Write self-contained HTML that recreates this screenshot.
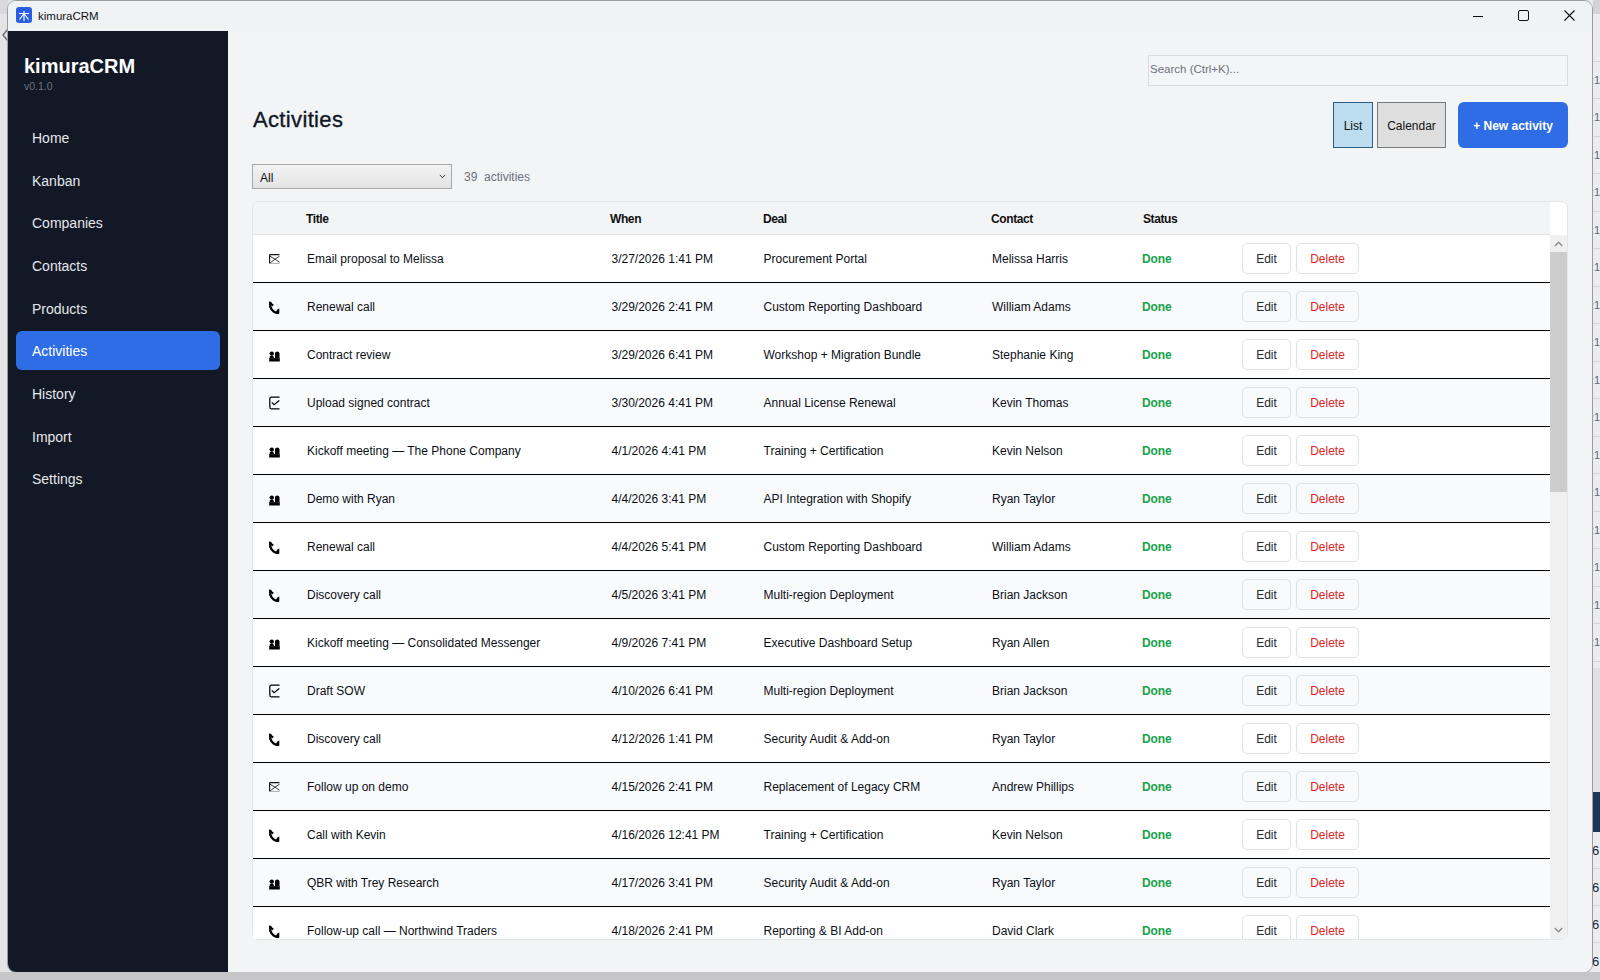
<!DOCTYPE html>
<html><head><meta charset="utf-8"><title>kimuraCRM</title>
<style>
*{box-sizing:border-box;margin:0;padding:0}
html,body{width:1600px;height:980px;overflow:hidden}
body{position:relative;background:#e4e4e6;font-family:"Liberation Sans",sans-serif;color:#111827}
.abs{position:absolute}
#bgbottom{left:0;top:972px;width:1600px;height:8px;background:#c6c6c8;z-index:2}
#bgright{left:1590px;top:0;width:10px;height:980px;background:#ececee}
#win{left:7px;top:0;width:1586px;height:973px;border:1px solid #9c9c9e;border-radius:9px;overflow:hidden;background:#f3f4f6}
#titlebar{left:0;top:0;width:1584px;height:30px;background:#eff3f6}
#sidebar{left:0;top:30px;width:220px;height:942px;background:#121826}
#main{left:220px;top:30px;width:1364px;height:942px;background:#f3f4f6}
.nav{position:absolute;left:8px;width:204px;height:39px;border-radius:6px;color:#e5e7eb;font-size:14px;line-height:41px;padding-left:16px}
.nav.active{background:#2e6de6;color:#fff}
#search{left:920px;top:24px;width:420px;height:31px;border:1px solid #d9dce1;background:#f4f5f7;font-size:11.5px;color:#6b7280;line-height:27px;padding-left:1px}
#heading{left:25px;top:74.5px;font-size:22px;letter-spacing:0.35px;line-height:28px;color:#111827;-webkit-text-stroke:0.35px #111827}
.wb{position:absolute;top:71px;height:46px;font-size:12px;line-height:47px;text-align:center;color:#111}
#newbtn{left:1230px;top:71px;width:110px;height:46px;border-radius:6px;background:#2e6de6;color:#fff;font-size:12px;font-weight:bold;line-height:48px;text-align:center}
#filter{left:24px;top:133px;width:200px;height:25px;border:1px solid #a9a9a9;background:linear-gradient(#f2f2f2,#e4e4e4);font-size:12px;line-height:26px;padding-left:7px;color:#111}
#count{left:236px;top:133.5px;font-size:12px;line-height:25px;color:#6b7280;white-space:pre}
#table{left:24px;top:170px;width:1316px;height:739px;border:1px solid #e3e5e9;border-radius:7px;background:#fff}
#thead{left:0;top:0;width:1297px;height:33px;border-top-left-radius:6px;background:#f3f4f6;border-bottom:1px solid #e3e5e9}
.h{position:absolute;top:0;font-size:12px;font-weight:bold;line-height:35px;letter-spacing:-0.4px;color:#111}
.row{position:absolute;left:0;width:1297px;height:48px;border-bottom:1px solid #000}
.row .c{position:absolute;top:0;font-size:12px;line-height:48px;color:#0b0f17;white-space:nowrap}
.row .done{color:#16a34a;font-weight:bold;letter-spacing:-0.1px}
.row .btn{position:absolute;top:8px;height:31px;border:1px solid #dfe2e6;border-radius:5px;font-size:12px;line-height:31px;text-align:center;color:#1f2937}
.row .del{color:#dc2626}
.ico{position:absolute;left:16px}
#sb{left:1297px;top:0;width:17px;height:737px;background:#f0f0f0}
</style></head>
<body>
<div id="bgbottom" class="abs"></div>
<div id="bgright" class="abs"></div>
<div class="abs" style="left:0;top:0;width:8px;height:14px;background:#d9d8dc"></div>
<svg class="abs" style="left:0;top:28px" width="8" height="14" viewBox="0 0 8 14"><path d="M7.5 1.5L3 7L7.5 12.5" stroke="#6a6a70" stroke-width="1.4" fill="none"/></svg>
<div class="abs" style="left:1593px;top:0;width:7px;height:14px;background:#d3d3d5"></div>
<div class="abs" style="left:1593px;top:668px;width:7px;height:124px;background:#e0e0e2"></div>
<div class="abs" style="left:1593px;top:792px;width:7px;height:40px;background:#1d3557"></div>
<div class="abs" style="left:1593px;top:61px;width:7px;height:1px;background:#d6d6d8"></div><div class="abs" style="left:1593px;top:98px;width:7px;height:1px;background:#d6d6d8"></div><div class="abs" style="left:1593px;top:136px;width:7px;height:1px;background:#d6d6d8"></div><div class="abs" style="left:1593px;top:173px;width:7px;height:1px;background:#d6d6d8"></div><div class="abs" style="left:1593px;top:211px;width:7px;height:1px;background:#d6d6d8"></div><div class="abs" style="left:1593px;top:248px;width:7px;height:1px;background:#d6d6d8"></div><div class="abs" style="left:1593px;top:286px;width:7px;height:1px;background:#d6d6d8"></div><div class="abs" style="left:1593px;top:323px;width:7px;height:1px;background:#d6d6d8"></div><div class="abs" style="left:1593px;top:361px;width:7px;height:1px;background:#d6d6d8"></div><div class="abs" style="left:1593px;top:398px;width:7px;height:1px;background:#d6d6d8"></div><div class="abs" style="left:1593px;top:436px;width:7px;height:1px;background:#d6d6d8"></div><div class="abs" style="left:1593px;top:473px;width:7px;height:1px;background:#d6d6d8"></div><div class="abs" style="left:1593px;top:511px;width:7px;height:1px;background:#d6d6d8"></div><div class="abs" style="left:1593px;top:548px;width:7px;height:1px;background:#d6d6d8"></div><div class="abs" style="left:1593px;top:586px;width:7px;height:1px;background:#d6d6d8"></div><div class="abs" style="left:1593px;top:623px;width:7px;height:1px;background:#d6d6d8"></div><div class="abs" style="left:1593px;top:661px;width:7px;height:1px;background:#d6d6d8"></div><div class="abs" style="left:1593px;top:868px;width:7px;height:1px;background:#d6d6d8"></div><div class="abs" style="left:1593px;top:905px;width:7px;height:1px;background:#d6d6d8"></div><div class="abs" style="left:1593px;top:942px;width:7px;height:1px;background:#d6d6d8"></div><div class="abs" style="left:1593px;top:73px;width:7px;height:14px;overflow:hidden;font-size:11px;line-height:14px;color:#667"><span style="position:relative;left:-2px">:1</span></div><div class="abs" style="left:1593px;top:110px;width:7px;height:14px;overflow:hidden;font-size:11px;line-height:14px;color:#667"><span style="position:relative;left:-2px">:1</span></div><div class="abs" style="left:1593px;top:148px;width:7px;height:14px;overflow:hidden;font-size:11px;line-height:14px;color:#667"><span style="position:relative;left:-2px">:1</span></div><div class="abs" style="left:1593px;top:185px;width:7px;height:14px;overflow:hidden;font-size:11px;line-height:14px;color:#667"><span style="position:relative;left:-2px">:1</span></div><div class="abs" style="left:1593px;top:223px;width:7px;height:14px;overflow:hidden;font-size:11px;line-height:14px;color:#667"><span style="position:relative;left:-2px">:1</span></div><div class="abs" style="left:1593px;top:260px;width:7px;height:14px;overflow:hidden;font-size:11px;line-height:14px;color:#667"><span style="position:relative;left:-2px">:1</span></div><div class="abs" style="left:1593px;top:298px;width:7px;height:14px;overflow:hidden;font-size:11px;line-height:14px;color:#667"><span style="position:relative;left:-2px">:1</span></div><div class="abs" style="left:1593px;top:335px;width:7px;height:14px;overflow:hidden;font-size:11px;line-height:14px;color:#667"><span style="position:relative;left:-2px">:1</span></div><div class="abs" style="left:1593px;top:373px;width:7px;height:14px;overflow:hidden;font-size:11px;line-height:14px;color:#667"><span style="position:relative;left:-2px">:1</span></div><div class="abs" style="left:1593px;top:410px;width:7px;height:14px;overflow:hidden;font-size:11px;line-height:14px;color:#667"><span style="position:relative;left:-2px">:1</span></div><div class="abs" style="left:1593px;top:448px;width:7px;height:14px;overflow:hidden;font-size:11px;line-height:14px;color:#667"><span style="position:relative;left:-2px">:1</span></div><div class="abs" style="left:1593px;top:485px;width:7px;height:14px;overflow:hidden;font-size:11px;line-height:14px;color:#667"><span style="position:relative;left:-2px">:1</span></div><div class="abs" style="left:1593px;top:523px;width:7px;height:14px;overflow:hidden;font-size:11px;line-height:14px;color:#667"><span style="position:relative;left:-2px">:1</span></div><div class="abs" style="left:1593px;top:560px;width:7px;height:14px;overflow:hidden;font-size:11px;line-height:14px;color:#667"><span style="position:relative;left:-2px">:1</span></div><div class="abs" style="left:1593px;top:598px;width:7px;height:14px;overflow:hidden;font-size:11px;line-height:14px;color:#667"><span style="position:relative;left:-2px">:1</span></div><div class="abs" style="left:1593px;top:635px;width:7px;height:14px;overflow:hidden;font-size:11px;line-height:14px;color:#667"><span style="position:relative;left:-2px">:1</span></div><div class="abs" style="left:1593px;top:843px;width:7px;height:16px;overflow:hidden;font-size:13px;line-height:16px;color:#223"><span style="position:relative;left:-1px">6</span></div><div class="abs" style="left:1593px;top:880px;width:7px;height:16px;overflow:hidden;font-size:13px;line-height:16px;color:#223"><span style="position:relative;left:-1px">6</span></div><div class="abs" style="left:1593px;top:917px;width:7px;height:16px;overflow:hidden;font-size:13px;line-height:16px;color:#223"><span style="position:relative;left:-1px">6</span></div><div class="abs" style="left:1593px;top:954px;width:7px;height:16px;overflow:hidden;font-size:13px;line-height:16px;color:#223"><span style="position:relative;left:-1px">6</span></div>
<div id="win" class="abs">
  <div id="titlebar" class="abs">
    <svg class="abs" style="left:8px;top:6px" width="16" height="16" viewBox="0 0 16 16">
      <rect x="0" y="0" width="16" height="16" rx="3" fill="#2a5de0"/>
      <path d="M3 6.5H13M8 4V14M8 6.5L3.5 12.5M8 6.5L12.5 12.5" stroke="#fff" stroke-width="1.1" fill="none"/>
    </svg>
    <div class="abs" style="left:30px;top:9px;font-size:11.5px;color:#111">kimuraCRM</div>
    <svg class="abs" style="left:1464px;top:8px" width="14" height="14" viewBox="0 0 14 14"><path d="M1 7.5H11" stroke="#111" stroke-width="1"/></svg>
    <svg class="abs" style="left:1509px;top:7px" width="14" height="14" viewBox="0 0 14 14"><rect x="1.5" y="2.5" width="10" height="10" rx="1.5" stroke="#111" stroke-width="1" fill="none"/></svg>
    <svg class="abs" style="left:1555px;top:7px" width="14" height="14" viewBox="0 0 14 14"><path d="M1.5 2.5L11.5 12.5M11.5 2.5L1.5 12.5" stroke="#111" stroke-width="1.15"/></svg>
  </div>
  <div id="sidebar" class="abs">
    <div class="abs" style="left:16px;top:24px;font-size:20px;font-weight:bold;color:#fff">kimuraCRM</div>
    <div class="abs" style="left:16px;top:48.5px;font-size:10.5px;color:#6b7280">v0.1.0</div>
    <div class="nav" style="top:87px">Home</div>
    <div class="nav" style="top:129.75px">Kanban</div>
    <div class="nav" style="top:172.4px">Companies</div>
    <div class="nav" style="top:215px">Contacts</div>
    <div class="nav" style="top:257.7px">Products</div>
    <div class="nav active" style="top:300.3px">Activities</div>
    <div class="nav" style="top:343px">History</div>
    <div class="nav" style="top:385.6px">Import</div>
    <div class="nav" style="top:428.2px">Settings</div>
  </div>
  <div id="main" class="abs">
    <div id="search" class="abs">Search (Ctrl+K)...</div>
    <div id="heading" class="abs">Activities</div>
    <div class="wb" style="left:1105px;width:40px;border:1px solid #2c5f8a;background:#bcdcf0">List</div>
    <div class="wb" style="left:1149px;width:69px;border:1px solid #7a7a7a;background:#dedede">Calendar</div>
    <div id="newbtn" class="abs">+ New activity</div>
    <div id="filter" class="abs">All<svg class="abs" style="left:186px;top:9px" width="7" height="5" viewBox="0 0 7 5"><path d="M0.8 0.8L3.5 3.8L6.2 0.8" stroke="#444" stroke-width="1" fill="none"/></svg></div>
    <div id="count" class="abs">39  activities</div>
    <div id="table" class="abs">
      <div id="thead" class="abs"><div class="h" style="left:53px">Title</div><div class="h" style="left:357px">When</div><div class="h" style="left:510px">Deal</div><div class="h" style="left:738px">Contact</div><div class="h" style="left:890px">Status</div></div>
      <div class="abs" style="left:1297px;top:0;width:17px;height:33px;background:#fff;border-top-right-radius:6px"></div>
      <div id="rows" class="abs" style="left:0;top:33px;width:1297px;height:704px;overflow:hidden">
<div class="row" style="top:0px;background:#ffffff"><svg class="ico" style="top:19px" width="11" height="11" viewBox="0 0 11 11"><path d="M0.5 0.6H10.5M0.6 0.5V9.6" stroke="#111" stroke-width="1.1" fill="none"/><path d="M1 2.2L6 5.2L10.5 2.3M1 9L6 5.2L10.5 8.3" stroke="#222" stroke-width="0.9" fill="none"/><path d="M1 9.4H10.5" stroke="#aaa" stroke-width="1" fill="none"/></svg><div class="c" style="left:54px">Email proposal to Melissa</div><div class="c" style="left:358.5px">3/27/2026 1:41 PM</div><div class="c" style="left:510.5px">Procurement Portal</div><div class="c" style="left:739px">Melissa Harris</div><div class="c done" style="left:889px">Done</div><div class="btn" style="left:989px;width:49px">Edit</div><div class="btn del" style="left:1043px;width:63px">Delete</div></div>
<div class="row" style="top:48px;background:#f9fafb"><svg class="ico" style="top:18px" width="11" height="13" viewBox="0 0 11 13"><path d="M1.6 0.8C0.2 3.5 1.2 8.5 5 10.8C6.5 11.7 8.5 12 10 11.8" stroke="#000" stroke-width="2.4" fill="none"/><path d="M0.8 0.6L4.8 3.8L3.2 5.6L1.4 3.4Z M10.3 7.6L10.3 12.2L6.6 11.2L8.6 8.2Z" fill="#000"/></svg><div class="c" style="left:54px">Renewal call</div><div class="c" style="left:358.5px">3/29/2026 2:41 PM</div><div class="c" style="left:510.5px">Custom Reporting Dashboard</div><div class="c" style="left:739px">William Adams</div><div class="c done" style="left:889px">Done</div><div class="btn" style="left:989px;width:49px">Edit</div><div class="btn del" style="left:1043px;width:63px">Delete</div></div>
<div class="row" style="top:96px;background:#ffffff"><svg class="ico" style="top:20px" width="11" height="11" viewBox="0 0 11 11"><circle cx="2.8" cy="2.6" r="2.2" fill="#000"/><circle cx="8.2" cy="2.6" r="2.2" fill="#000"/><path d="M0.5 7.5C0.5 5.5 1.5 4.6 2.8 4.6C4 4.6 5 5.5 5 7.5Z M6 7.5L6 2.5 L10.5 2.5 L10.5 7.5Z" fill="#000"/><rect x="0.2" y="7.2" width="10.6" height="3.3" fill="#000"/></svg><div class="c" style="left:54px">Contract review</div><div class="c" style="left:358.5px">3/29/2026 6:41 PM</div><div class="c" style="left:510.5px">Workshop + Migration Bundle</div><div class="c" style="left:739px">Stephanie King</div><div class="c done" style="left:889px">Done</div><div class="btn" style="left:989px;width:49px">Edit</div><div class="btn del" style="left:1043px;width:63px">Delete</div></div>
<div class="row" style="top:144px;background:#f9fafb"><svg class="ico" style="top:17px" width="11" height="14" viewBox="0 0 11 14"><path d="M10.5 1.2H2.5Q0.8 1.2 0.8 3V11Q0.8 12.8 2.5 12.8H10.5" stroke="#000" stroke-width="1.25" fill="none"/><path d="M2.8 6.3L5 8.6L10.3 4.5" stroke="#000" stroke-width="1.2" fill="none"/></svg><div class="c" style="left:54px">Upload signed contract</div><div class="c" style="left:358.5px">3/30/2026 4:41 PM</div><div class="c" style="left:510.5px">Annual License Renewal</div><div class="c" style="left:739px">Kevin Thomas</div><div class="c done" style="left:889px">Done</div><div class="btn" style="left:989px;width:49px">Edit</div><div class="btn del" style="left:1043px;width:63px">Delete</div></div>
<div class="row" style="top:192px;background:#ffffff"><svg class="ico" style="top:20px" width="11" height="11" viewBox="0 0 11 11"><circle cx="2.8" cy="2.6" r="2.2" fill="#000"/><circle cx="8.2" cy="2.6" r="2.2" fill="#000"/><path d="M0.5 7.5C0.5 5.5 1.5 4.6 2.8 4.6C4 4.6 5 5.5 5 7.5Z M6 7.5L6 2.5 L10.5 2.5 L10.5 7.5Z" fill="#000"/><rect x="0.2" y="7.2" width="10.6" height="3.3" fill="#000"/></svg><div class="c" style="left:54px">Kickoff meeting — The Phone Company</div><div class="c" style="left:358.5px">4/1/2026 4:41 PM</div><div class="c" style="left:510.5px">Training + Certification</div><div class="c" style="left:739px">Kevin Nelson</div><div class="c done" style="left:889px">Done</div><div class="btn" style="left:989px;width:49px">Edit</div><div class="btn del" style="left:1043px;width:63px">Delete</div></div>
<div class="row" style="top:240px;background:#f9fafb"><svg class="ico" style="top:20px" width="11" height="11" viewBox="0 0 11 11"><circle cx="2.8" cy="2.6" r="2.2" fill="#000"/><circle cx="8.2" cy="2.6" r="2.2" fill="#000"/><path d="M0.5 7.5C0.5 5.5 1.5 4.6 2.8 4.6C4 4.6 5 5.5 5 7.5Z M6 7.5L6 2.5 L10.5 2.5 L10.5 7.5Z" fill="#000"/><rect x="0.2" y="7.2" width="10.6" height="3.3" fill="#000"/></svg><div class="c" style="left:54px">Demo with Ryan</div><div class="c" style="left:358.5px">4/4/2026 3:41 PM</div><div class="c" style="left:510.5px">API Integration with Shopify</div><div class="c" style="left:739px">Ryan Taylor</div><div class="c done" style="left:889px">Done</div><div class="btn" style="left:989px;width:49px">Edit</div><div class="btn del" style="left:1043px;width:63px">Delete</div></div>
<div class="row" style="top:288px;background:#ffffff"><svg class="ico" style="top:18px" width="11" height="13" viewBox="0 0 11 13"><path d="M1.6 0.8C0.2 3.5 1.2 8.5 5 10.8C6.5 11.7 8.5 12 10 11.8" stroke="#000" stroke-width="2.4" fill="none"/><path d="M0.8 0.6L4.8 3.8L3.2 5.6L1.4 3.4Z M10.3 7.6L10.3 12.2L6.6 11.2L8.6 8.2Z" fill="#000"/></svg><div class="c" style="left:54px">Renewal call</div><div class="c" style="left:358.5px">4/4/2026 5:41 PM</div><div class="c" style="left:510.5px">Custom Reporting Dashboard</div><div class="c" style="left:739px">William Adams</div><div class="c done" style="left:889px">Done</div><div class="btn" style="left:989px;width:49px">Edit</div><div class="btn del" style="left:1043px;width:63px">Delete</div></div>
<div class="row" style="top:336px;background:#f9fafb"><svg class="ico" style="top:18px" width="11" height="13" viewBox="0 0 11 13"><path d="M1.6 0.8C0.2 3.5 1.2 8.5 5 10.8C6.5 11.7 8.5 12 10 11.8" stroke="#000" stroke-width="2.4" fill="none"/><path d="M0.8 0.6L4.8 3.8L3.2 5.6L1.4 3.4Z M10.3 7.6L10.3 12.2L6.6 11.2L8.6 8.2Z" fill="#000"/></svg><div class="c" style="left:54px">Discovery call</div><div class="c" style="left:358.5px">4/5/2026 3:41 PM</div><div class="c" style="left:510.5px">Multi-region Deployment</div><div class="c" style="left:739px">Brian Jackson</div><div class="c done" style="left:889px">Done</div><div class="btn" style="left:989px;width:49px">Edit</div><div class="btn del" style="left:1043px;width:63px">Delete</div></div>
<div class="row" style="top:384px;background:#ffffff"><svg class="ico" style="top:20px" width="11" height="11" viewBox="0 0 11 11"><circle cx="2.8" cy="2.6" r="2.2" fill="#000"/><circle cx="8.2" cy="2.6" r="2.2" fill="#000"/><path d="M0.5 7.5C0.5 5.5 1.5 4.6 2.8 4.6C4 4.6 5 5.5 5 7.5Z M6 7.5L6 2.5 L10.5 2.5 L10.5 7.5Z" fill="#000"/><rect x="0.2" y="7.2" width="10.6" height="3.3" fill="#000"/></svg><div class="c" style="left:54px">Kickoff meeting — Consolidated Messenger</div><div class="c" style="left:358.5px">4/9/2026 7:41 PM</div><div class="c" style="left:510.5px">Executive Dashboard Setup</div><div class="c" style="left:739px">Ryan Allen</div><div class="c done" style="left:889px">Done</div><div class="btn" style="left:989px;width:49px">Edit</div><div class="btn del" style="left:1043px;width:63px">Delete</div></div>
<div class="row" style="top:432px;background:#f9fafb"><svg class="ico" style="top:17px" width="11" height="14" viewBox="0 0 11 14"><path d="M10.5 1.2H2.5Q0.8 1.2 0.8 3V11Q0.8 12.8 2.5 12.8H10.5" stroke="#000" stroke-width="1.25" fill="none"/><path d="M2.8 6.3L5 8.6L10.3 4.5" stroke="#000" stroke-width="1.2" fill="none"/></svg><div class="c" style="left:54px">Draft SOW</div><div class="c" style="left:358.5px">4/10/2026 6:41 PM</div><div class="c" style="left:510.5px">Multi-region Deployment</div><div class="c" style="left:739px">Brian Jackson</div><div class="c done" style="left:889px">Done</div><div class="btn" style="left:989px;width:49px">Edit</div><div class="btn del" style="left:1043px;width:63px">Delete</div></div>
<div class="row" style="top:480px;background:#ffffff"><svg class="ico" style="top:18px" width="11" height="13" viewBox="0 0 11 13"><path d="M1.6 0.8C0.2 3.5 1.2 8.5 5 10.8C6.5 11.7 8.5 12 10 11.8" stroke="#000" stroke-width="2.4" fill="none"/><path d="M0.8 0.6L4.8 3.8L3.2 5.6L1.4 3.4Z M10.3 7.6L10.3 12.2L6.6 11.2L8.6 8.2Z" fill="#000"/></svg><div class="c" style="left:54px">Discovery call</div><div class="c" style="left:358.5px">4/12/2026 1:41 PM</div><div class="c" style="left:510.5px">Security Audit &amp; Add-on</div><div class="c" style="left:739px">Ryan Taylor</div><div class="c done" style="left:889px">Done</div><div class="btn" style="left:989px;width:49px">Edit</div><div class="btn del" style="left:1043px;width:63px">Delete</div></div>
<div class="row" style="top:528px;background:#f9fafb"><svg class="ico" style="top:19px" width="11" height="11" viewBox="0 0 11 11"><path d="M0.5 0.6H10.5M0.6 0.5V9.6" stroke="#111" stroke-width="1.1" fill="none"/><path d="M1 2.2L6 5.2L10.5 2.3M1 9L6 5.2L10.5 8.3" stroke="#222" stroke-width="0.9" fill="none"/><path d="M1 9.4H10.5" stroke="#aaa" stroke-width="1" fill="none"/></svg><div class="c" style="left:54px">Follow up on demo</div><div class="c" style="left:358.5px">4/15/2026 2:41 PM</div><div class="c" style="left:510.5px">Replacement of Legacy CRM</div><div class="c" style="left:739px">Andrew Phillips</div><div class="c done" style="left:889px">Done</div><div class="btn" style="left:989px;width:49px">Edit</div><div class="btn del" style="left:1043px;width:63px">Delete</div></div>
<div class="row" style="top:576px;background:#ffffff"><svg class="ico" style="top:18px" width="11" height="13" viewBox="0 0 11 13"><path d="M1.6 0.8C0.2 3.5 1.2 8.5 5 10.8C6.5 11.7 8.5 12 10 11.8" stroke="#000" stroke-width="2.4" fill="none"/><path d="M0.8 0.6L4.8 3.8L3.2 5.6L1.4 3.4Z M10.3 7.6L10.3 12.2L6.6 11.2L8.6 8.2Z" fill="#000"/></svg><div class="c" style="left:54px">Call with Kevin</div><div class="c" style="left:358.5px">4/16/2026 12:41 PM</div><div class="c" style="left:510.5px">Training + Certification</div><div class="c" style="left:739px">Kevin Nelson</div><div class="c done" style="left:889px">Done</div><div class="btn" style="left:989px;width:49px">Edit</div><div class="btn del" style="left:1043px;width:63px">Delete</div></div>
<div class="row" style="top:624px;background:#f9fafb"><svg class="ico" style="top:20px" width="11" height="11" viewBox="0 0 11 11"><circle cx="2.8" cy="2.6" r="2.2" fill="#000"/><circle cx="8.2" cy="2.6" r="2.2" fill="#000"/><path d="M0.5 7.5C0.5 5.5 1.5 4.6 2.8 4.6C4 4.6 5 5.5 5 7.5Z M6 7.5L6 2.5 L10.5 2.5 L10.5 7.5Z" fill="#000"/><rect x="0.2" y="7.2" width="10.6" height="3.3" fill="#000"/></svg><div class="c" style="left:54px">QBR with Trey Research</div><div class="c" style="left:358.5px">4/17/2026 3:41 PM</div><div class="c" style="left:510.5px">Security Audit &amp; Add-on</div><div class="c" style="left:739px">Ryan Taylor</div><div class="c done" style="left:889px">Done</div><div class="btn" style="left:989px;width:49px">Edit</div><div class="btn del" style="left:1043px;width:63px">Delete</div></div>
<div class="row" style="top:672px;background:#ffffff"><svg class="ico" style="top:18px" width="11" height="13" viewBox="0 0 11 13"><path d="M1.6 0.8C0.2 3.5 1.2 8.5 5 10.8C6.5 11.7 8.5 12 10 11.8" stroke="#000" stroke-width="2.4" fill="none"/><path d="M0.8 0.6L4.8 3.8L3.2 5.6L1.4 3.4Z M10.3 7.6L10.3 12.2L6.6 11.2L8.6 8.2Z" fill="#000"/></svg><div class="c" style="left:54px">Follow-up call — Northwind Traders</div><div class="c" style="left:358.5px">4/18/2026 2:41 PM</div><div class="c" style="left:510.5px">Reporting &amp; BI Add-on</div><div class="c" style="left:739px">David Clark</div><div class="c done" style="left:889px">Done</div><div class="btn" style="left:989px;width:49px">Edit</div><div class="btn del" style="left:1043px;width:63px">Delete</div></div>

      </div>
      <div class="abs" style="left:1297px;top:33px;width:17px;height:704px;background:#f0f0f0;border-bottom-right-radius:6px">
        <svg class="abs" style="left:4px;top:6px" width="9" height="6" viewBox="0 0 9 6"><path d="M0.8 5L4.5 1.2L8.2 5" stroke="#8a8a8a" stroke-width="1.3" fill="none"/></svg>
        <div class="abs" style="left:0;top:17px;width:17px;height:240px;background:#cdcdcd"></div>
        <svg class="abs" style="left:4px;top:692px" width="9" height="6" viewBox="0 0 9 6"><path d="M0.8 1L4.5 4.8L8.2 1" stroke="#8a8a8a" stroke-width="1.3" fill="none"/></svg>
      </div>
    </div>
  </div>
</div>
</body></html>
